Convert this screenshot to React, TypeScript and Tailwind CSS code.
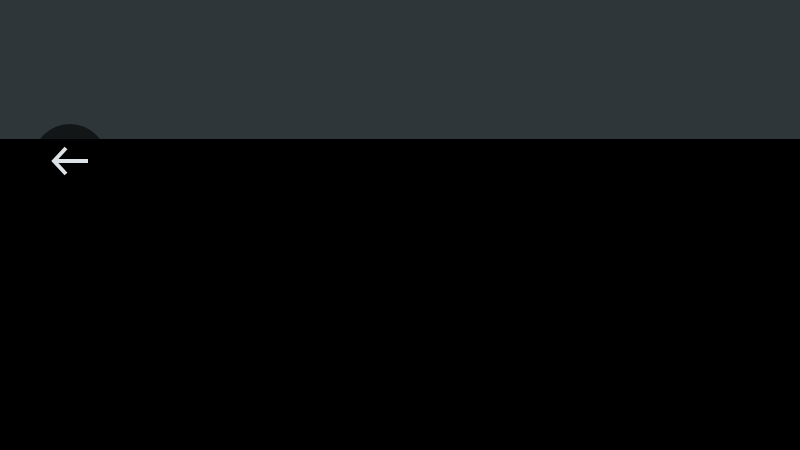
function BackArrow() {
  return (
    <svg width="74" height="74" viewBox="0 0 74 74" fill="none" stroke="#dce2e5" strokeWidth="4">
      <path d="M33 24 L21 37 L33 50" />
      <path d="M22 37 L55 37" />
    </svg>
  )
}

export default function App() {
  return (
    <div className="relative w-[800px] h-[450px] overflow-hidden bg-black flex flex-col">
      {/* toolbar strip; round back button sits half under the black content */}
      <div className="relative h-[139px] bg-[#2f3639] overflow-hidden">
        <div className="absolute left-[33px] top-[124px] w-[74px] h-[74px] rounded-full bg-[#131617]" />
      </div>
      <main className="flex-1 bg-black" />
      <button className="absolute left-[33px] top-[124px] w-[74px] h-[74px] flex items-center justify-center">
        <BackArrow />
      </button>
    </div>
  )
}
